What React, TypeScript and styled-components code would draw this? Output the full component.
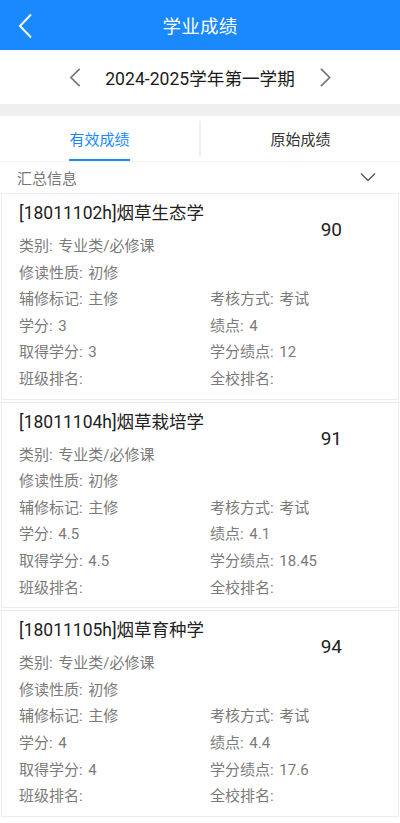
import React from "react"
import styled, { createGlobalStyle } from "styled-components"

const GlobalStyle = createGlobalStyle`
  html, body {
    margin: 0;
    padding: 0;
    background: #ffffff;
    font-family: Roboto, "Noto Sans CJK SC", sans-serif;
  }
`

const Page = styled.div`
  width: 400px;
  min-height: 823px;
  background: #ffffff;
`

const TopBar = styled.div`
  height: 50px;
  background: #1a89fe;
  display: flex;
  align-items: center;
  justify-content: center;
  position: relative;
`

const Title = styled.div`
  color: #ffffff;
  font-size: 18.5px;
  letter-spacing: 0.3px;
`

const BackButton = styled.div`
  position: absolute;
  left: 17px;
  top: 13px;
  width: 18px;
  height: 26px;
`

const TermRow = styled.div`
  height: 54px;
  display: flex;
  align-items: center;
  justify-content: center;
  gap: 24px;
`

const TermText = styled.div`
  font-size: 17.6px;
  color: #1b1b1b;
`

const Band = styled.div`
  height: 12px;
  background: #efefef;
`

const Tabs = styled.div`
  height: 45px;
  display: flex;
  align-items: stretch;
  border-bottom: 1px solid #f2f2f2;
`

const Tab = styled.div<{ $active?: boolean }>`
  flex: 1;
  display: flex;
  justify-content: center;
  align-items: center;
  position: relative;
  font-size: 15px;
  color: ${(p) => (p.$active ? "#1a89fe" : "#333333")};
  & > span {
    position: relative;
    height: 45px;
    line-height: 45px;
    padding-top: 2px;
    box-sizing: border-box;
  }
  & > span::after {
    content: "";
    display: ${(p) => (p.$active ? "block" : "none")};
    position: absolute;
    left: 0;
    right: 0;
    bottom: 0;
    height: 2px;
    background: #1a89fe;
  }
`

const TabDivider = styled.div`
  width: 2px;
  margin: 5px 0 4px;
  background: #eeeeee;
`

const SummaryRow = styled.div`
  height: 31px;
  display: flex;
  align-items: center;
  justify-content: space-between;
  padding: 0 24px 0 17px;
  font-size: 15px;
  color: #767676;
`

const Card = styled.div`
  position: relative;
  margin: 0 1px 2px;
  border: 1px solid #ececec;
  padding: 5px 0 6px 17px;
`

const CourseName = styled.div`
  font-size: 17.5px;
  color: #222222;
  line-height: 28px;
  margin-bottom: 6px;
`

const Score = styled.div`
  position: absolute;
  right: 56px;
  top: 24px;
  font-size: 19px;
  color: #222222;
`

const Fields = styled.div`
  display: grid;
  grid-template-columns: 191px 1fr;
`

const Field = styled.div<{ $full?: boolean }>`
  grid-column: ${(p) => (p.$full ? "1 / span 2" : "auto")};
  font-size: 15px;
  line-height: 26.6px;
  word-spacing: 2px;
  color: #7a7a7a;
  white-space: nowrap;
`

const Chevron = ({ dir, color, size }: { dir: "left" | "right" | "down"; color: string; size: number }) => {
  if (dir === "down") {
    return (
      <svg width={size} height={size * 0.7} viewBox="0 0 16 11" fill="none">
        <path d="M1 1.5 L8 8.5 L15 1.5" stroke={color} strokeWidth="1.4" />
      </svg>
    )
  }
  const d = dir === "left" ? "M11 1 L2 10 L11 19" : "M2 1 L11 10 L2 19"
  return (
    <svg width={size * 0.6} height={size} viewBox="0 0 13 20" fill="none">
      <path d={d} stroke={color} strokeWidth="1.8" />
    </svg>
  )
}

type Course = {
  name: string
  score: string
  credit: string
  gpa: string
  got: string
  creditGpa: string
}

const courses: Course[] = [
  { name: "[18011102h]烟草生态学", score: "90", credit: "3", gpa: "4", got: "3", creditGpa: "12" },
  { name: "[18011104h]烟草栽培学", score: "91", credit: "4.5", gpa: "4.1", got: "4.5", creditGpa: "18.45" },
  { name: "[18011105h]烟草育种学", score: "94", credit: "4", gpa: "4.4", got: "4", creditGpa: "17.6" },
]

export default function App() {
  return (
    <Page>
      <GlobalStyle />
      <TopBar>
        <BackButton>
          <svg width="18" height="26" viewBox="0 0 18 26" fill="none">
            <path d="M14 1.5 L3 13 L14 24.5" stroke="#ffffff" strokeWidth="2" />
          </svg>
        </BackButton>
        <Title>学业成绩</Title>
      </TopBar>
      <TermRow>
        <Chevron dir="left" color="#777777" size={21} />
        <TermText>2024-2025学年第一学期</TermText>
        <Chevron dir="right" color="#777777" size={21} />
      </TermRow>
      <Band />
      <Tabs>
        <Tab $active>
          <span>有效成绩</span>
        </Tab>
        <TabDivider />
        <Tab>
          <span>原始成绩</span>
        </Tab>
      </Tabs>
      <SummaryRow>
        <span>汇总信息</span>
        <Chevron dir="down" color="#555555" size={16} />
      </SummaryRow>
      {courses.map((c) => (
        <Card key={c.name}>
          <CourseName>{c.name}</CourseName>
          <Score>{c.score}</Score>
          <Fields>
            <Field $full>类别: 专业类/必修课</Field>
            <Field $full>修读性质: 初修</Field>
            <Field>辅修标记: 主修</Field>
            <Field>考核方式: 考试</Field>
            <Field>学分: {c.credit}</Field>
            <Field>绩点: {c.gpa}</Field>
            <Field>取得学分: {c.got}</Field>
            <Field>学分绩点: {c.creditGpa}</Field>
            <Field>班级排名:</Field>
            <Field>全校排名:</Field>
          </Fields>
        </Card>
      ))}
    </Page>
  )
}
